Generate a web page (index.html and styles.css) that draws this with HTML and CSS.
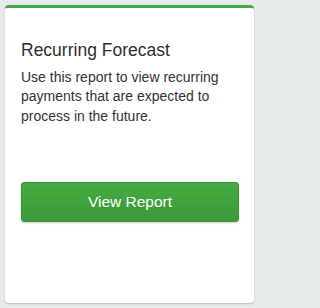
FILE: index.html
```html
<!DOCTYPE html>
<html>
<head>
<meta charset="utf-8">
<link rel="stylesheet" href="styles.css">
</head>
<body>
<div class="card">
  <h2 class="title">Recurring Forecast</h2>
  <p class="desc">Use this report to view recurring payments that are expected to process in the future.</p>
  <button class="btn">View Report</button>
</div>
</body>
</html>
```
FILE: styles.css
```css
html, body {
  margin: 0;
  padding: 0;
  background: #e8ebec;
  width: 258px;
  height: 308px;
  overflow: hidden;
}
body {
  padding: 5px 4px 4px 5px;
  box-sizing: border-box;
  font-family: "Liberation Sans", Arial, sans-serif;
}
.card {
  box-sizing: border-box;
  width: 249px;
  height: 298px;
  background: #fff;
  border-top: 3px solid #45a843;
  border-radius: 4px;
  box-shadow: 0 1px 2px rgba(0,0,0,0.18), 0 0 1px rgba(0,0,0,0.1);
  padding: 31px 15px 0 16px;
  display: flex;
  flex-direction: column;
}
.title {
  margin: 0;
  font-weight: 400;
  font-size: 17.5px;
  line-height: 22px;
  color: #2e2e2e;
}
.desc {
  margin: 6.5px 0 0;
  font-size: 14px;
  line-height: 19.5px;
  color: #333;
}
.btn {
  margin-top: 56px;
  height: 40px;
  width: 218px;
  border: 1px solid #3a9236;
  border-radius: 3px;
  background: linear-gradient(#46ab42, #3b9a37);
  color: #fff;
  font-family: inherit;
  font-size: 15.5px;
  box-shadow: 0 1px 2px rgba(0,0,0,0.2);
  padding: 0;
}
```
